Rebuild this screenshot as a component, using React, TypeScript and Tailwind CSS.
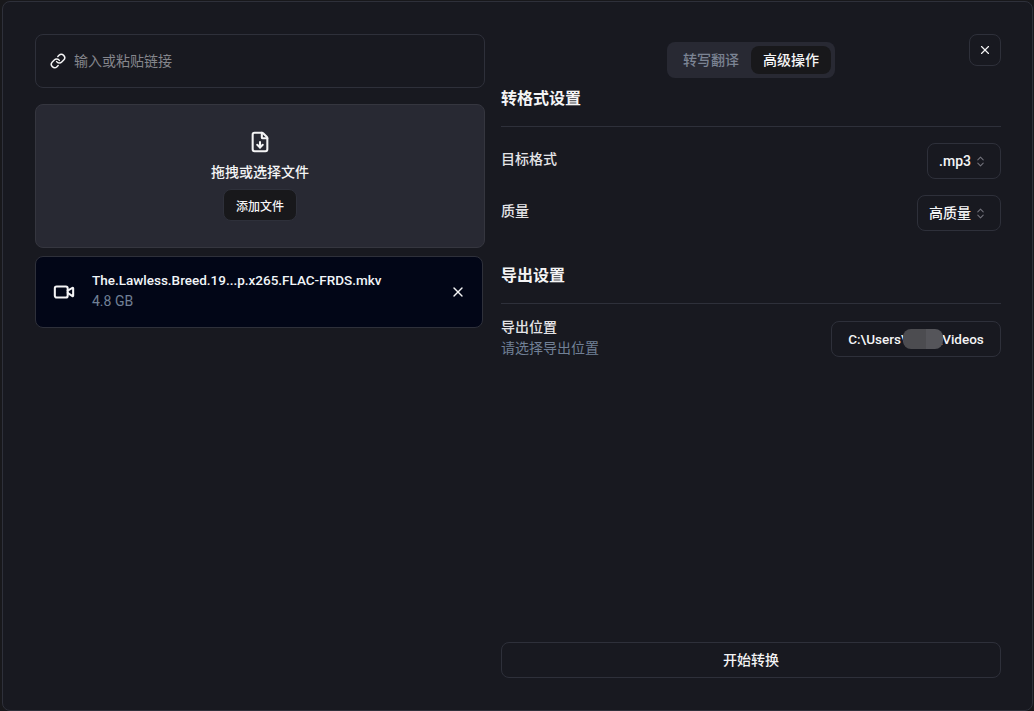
import { ChevronsUpDown, FileDown, Link, Video, X } from "lucide-react";

function SelectButton({ label }: { label: string }) {
  return (
    <button
      type="button"
      className="flex h-9 items-center gap-[3px] rounded-lg border border-[#2e303a] pr-[13px] pl-[11px] text-sm font-medium text-[#f4f4f5]"
    >
      {label}
      <ChevronsUpDown size={13} className="text-[#71717a]" />
    </button>
  );
}

function SectionTitle({ title }: { title: string }) {
  return (
    <div className="border-b border-[#2e303a] pt-px pb-[15px]">
      <h2 className="text-base leading-6 font-bold text-[#f4f4f5]">{title}</h2>
    </div>
  );
}

export default function App() {
  return (
    <div className="h-[711px] w-[1034px] bg-[#18181b] pt-px pr-px pl-[2px] font-['Roboto','Noto_Sans_CJK_SC',sans-serif]">
      <div className="flex h-[710px] w-[1031px] gap-4 rounded-lg border border-[#2e303a] bg-[#181920] pt-8 pr-[31px] pb-8 pl-8">
        {/* left column */}
        <div className="flex w-[450px] shrink-0 flex-col">
          <div className="flex h-[54px] items-center gap-2 rounded-lg border border-[#2e303a] px-[14px]">
            <Link size={16} strokeWidth={2.25} className="text-[#f4f4f5]" />
            <span className="text-sm text-[#85868c]">输入或粘贴链接</span>
          </div>

          <div className="mt-4 flex h-[144px] flex-col items-center rounded-lg border border-[#35363f] bg-[#282933] pt-[26px]">
            <FileDown size={22} strokeWidth={2.25} className="text-[#f4f4f5]" />
            <p className="mt-[9px] text-sm leading-5 font-medium text-[#f4f4f5]">拖拽或选择文件</p>
            <button
              type="button"
              className="mt-[7px] h-8 rounded-lg border border-[#2e303a] bg-[#18181b] px-3 pt-[3px] text-xs font-medium text-[#f4f4f5]"
            >
              添加文件
            </button>
          </div>

          <div className="mt-2 flex h-[72px] w-[448px] items-center rounded-lg border border-[#2e303a] bg-[#020617] pr-4 pl-[14px]">
            <Video size={22} strokeWidth={2.25} className="ml-[3px] text-[#f4f4f5]" />
            <div className="ml-[17px] min-w-0 flex-1 pb-1">
              <p className="text-[13.5px] leading-5 font-medium text-[#f1f5f9]">
                The.Lawless.Breed.19...p.x265.FLAC-FRDS.mkv
              </p>
              <p className="mt-px text-sm leading-5 text-[#718096]">4.8 GB</p>
            </div>
            <X size={16} className="text-[#f4f4f5]" />
          </div>
        </div>

        {/* right column */}
        <div className="relative flex flex-1 flex-col">
          <button
            type="button"
            className="absolute top-0 right-0 flex h-8 w-8 items-center justify-center rounded-lg border border-[#2e303a] text-[#f4f4f5]"
          >
            <X size={14} />
          </button>

          <div className="mt-2 flex justify-center">
            <div className="flex h-9 items-center rounded-lg bg-[#282933] p-1">
              <span className="px-3 text-sm leading-7 font-medium text-[#7c8494]">转写翻译</span>
              <span className="rounded-lg bg-[#18181b] px-3 text-sm leading-7 font-medium text-[#f4f4f5]">
                高级操作
              </span>
            </div>
          </div>

          <div className="mt-2">
            <SectionTitle title="转格式设置" />
            <div className="mt-4 flex items-start justify-between">
              <span className="pt-[6px] text-sm leading-5 font-medium text-[#e4e4e7]">目标格式</span>
              <SelectButton label=".mp3" />
            </div>
            <div className="mt-4 flex items-start justify-between">
              <span className="pt-[6px] text-sm leading-5 font-medium text-[#e4e4e7]">质量</span>
              <SelectButton label="高质量" />
            </div>
          </div>

          <div className="mt-8">
            <SectionTitle title="导出设置" />
            <div className="mt-[17px] flex items-start justify-between">
              <div className="-mt-1">
                <p className="text-sm leading-5 font-medium text-[#e4e4e7]">导出位置</p>
                <p className="mt-px text-sm leading-5 text-[#718096]">请选择导出位置</p>
              </div>
              <button
                type="button"
                className="relative flex h-9 w-[170px] items-center justify-center rounded-lg border border-[#2e303a] text-[13.5px] font-medium text-[#f4f4f5]"
              >
                C:\Users\<span className="inline-block w-[30px]" />\Videos
                {/* blurred user name */}
                <span className="absolute top-[7px] left-[71px] flex h-5 w-10 overflow-hidden rounded-lg">
                  <span className="w-[23px] bg-[#4c4c50]" />
                  <span className="flex-1 bg-[#55555a]" />
                </span>
              </button>
            </div>
          </div>

          <button
            type="button"
            className="mt-auto h-9 w-full rounded-lg border border-[#2e303a] text-sm font-medium text-[#f4f4f5]"
          >
            开始转换
          </button>
        </div>
      </div>
    </div>
  );
}
